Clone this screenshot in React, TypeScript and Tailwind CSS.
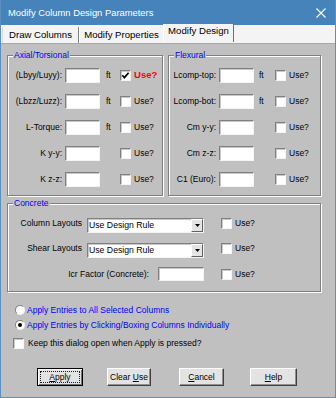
import React from "react";

const sunken =
  "bg-white border border-t-[#808080] border-l-[#808080] border-b-[#f4f4f4] border-r-[#f4f4f4] shadow-[inset_1px_1px_0_#c8c8c8]";

function Box({ className }: { className: string }) {
  return <div className={`${sunken} ${className}`} />;
}

function Check({ checked }: { checked?: boolean }) {
  return (
    <div className={`w-[11px] h-[11px] shrink-0 flex items-center justify-center ${sunken}`}>
      {checked && (
        <svg width="9" height="9" viewBox="0 0 9 9">
          <path d="M1.3 4.3 L3.4 6.6 L7.6 1.8" stroke="#000" strokeWidth="1.7" fill="none" />
        </svg>
      )}
    </div>
  );
}

function Radio({ checked }: { checked?: boolean }) {
  return (
    <div className="w-[10px] h-[10px] shrink-0 rounded-full bg-white border border-t-[#808080] border-l-[#808080] border-b-[#f0f0f0] border-r-[#f0f0f0] flex items-center justify-center">
      {checked && <div className="w-[4px] h-[4px] rounded-full bg-black" />}
    </div>
  );
}

function Group({
  label,
  className,
  children,
}: {
  label: string;
  className: string;
  children: React.ReactNode;
}) {
  return (
    <div
      className={`relative border border-[#808080] shadow-[inset_1px_1px_0_#ffffff,1px_1px_0_#ffffff] ${className}`}
    >
      <div className="absolute -top-[7px] left-[5px] h-[12px] leading-[12px] px-[1px] bg-[#c0c0c0] text-[#0000ff]">
        {label}
      </div>
      {children}
    </div>
  );
}

function ARow({ label, ft, red }: { label: string; ft?: boolean; red?: boolean }) {
  return (
    <div className="flex items-center h-[26px]">
      <div className="w-[54px] text-right whitespace-nowrap">{label}</div>
      <Box className="ml-[3px] w-[35px] h-[15px] shrink-0" />
      <div className="w-[20px] pl-[6px]">{ft ? "ft" : ""}</div>
      <Check checked={red} />
      <span className={`ml-[3px] ${red ? "text-[#ff0000] font-bold text-[9.6px]" : ""}`}>Use?</span>
    </div>
  );
}

function FRow({ label, ft }: { label: string; ft?: boolean }) {
  return (
    <div className="flex items-center h-[26px]">
      <div className="w-[47px] text-right whitespace-nowrap">{label}</div>
      <Box className="ml-[3px] w-[35px] h-[15px] shrink-0" />
      <div className="w-[21px] pl-[5px]">{ft ? "ft" : ""}</div>
      <Check />
      <span className="ml-[3px]">Use?</span>
    </div>
  );
}

function Select() {
  return (
    <div className={`mt-[4px] w-[117px] h-[15px] shrink-0 flex items-center ${sunken}`}>
      <span className="flex-1 pl-[1px] text-[8.7px] whitespace-nowrap">Use Design Rule</span>
      <div className="w-[12px] h-[13px] bg-[#e4e4e4] border border-t-white border-l-white border-b-[#606060] border-r-[#606060] flex items-center justify-center">
        <svg width="5" height="3" viewBox="0 0 5 3">
          <path d="M0 0 H5 L2.5 3 Z" fill="#000" />
        </svg>
      </div>
    </div>
  );
}

function Btn({
  children,
  className,
  def,
}: {
  children: React.ReactNode;
  className: string;
  def?: boolean;
}) {
  return (
    <div
      className={`relative h-[18px] shrink-0 flex items-center justify-center bg-[#e3e3e3] ${
        def
          ? "border border-black shadow-[inset_1px_1px_0_#ffffff,inset_-1px_-1px_0_#707070]"
          : "border border-t-white border-l-white border-b-[#404040] border-r-[#404040] shadow-[inset_-1px_-1px_0_#909090]"
      } ${className}`}
    >
      {def && <div className="absolute inset-[2px] border border-dotted border-[#202020]" />}
      <span className="relative">{children}</span>
    </div>
  );
}

export default function App() {
  return (
    <div className="w-[336px] h-[398px] flex flex-col border-x border-b border-[#5a8fc0] font-['Liberation_Sans',Arial,sans-serif] text-[8.5px] leading-none text-black bg-[#c0c0c0] overflow-hidden">
      {/* Title bar */}
      <div className="h-[25px] shrink-0 bg-[#4683ba] flex items-center -mx-[1px] pl-[8px] pr-[8px]">
        <span className="text-white text-[9.4px] flex-1 whitespace-nowrap">Modify Column Design Parameters</span>
        <svg width="10" height="10" viewBox="0 0 10 10" className="mr-[2px]">
          <path d="M0.5 0.5 L9.5 9.5 M9.5 0.5 L0.5 9.5" stroke="#ffffff" strokeWidth="1.1" />
        </svg>
      </div>

      {/* Tabs */}
      <div className="h-[19px] shrink-0 bg-[#f4f4f4] flex items-end pl-[1px] border-b border-[#a8a8a8] text-[9.6px]">
        <div className="h-[16px] w-[77px] flex items-center justify-center border-l border-l-[#d8d8d8] border-r border-r-[#808080] whitespace-nowrap">
          Draw Columns
        </div>
        <div className="h-[16px] w-[84px] flex items-center justify-center border-l border-l-white whitespace-nowrap">
          Modify Properties
        </div>
        <div className="h-[18px] w-[71px] mb-[1px] flex items-start pt-[2px] justify-center bg-[#f4f4f4] border-l border-l-white border-r border-r-[#707070] whitespace-nowrap">
          Modify Design
        </div>
      </div>

      {/* Body */}
      <div className="flex-1 flex flex-col pl-[6px] pt-[11px]">
        <div className="flex">
          <Group label="Axial/Torsional" className="w-[156px] h-[141px] pt-[6px]">
            <ARow label="(Lbyy/Luyy):" ft red />
            <ARow label="(Lbzz/Luzz):" ft />
            <ARow label="L-Torque:" ft />
            <ARow label="K y-y:" />
            <ARow label="K z-z:" />
          </Group>
          <Group label="Flexural" className="ml-[5px] w-[153px] h-[141px] pt-[6px]">
            <FRow label="Lcomp-top:" ft />
            <FRow label="Lcomp-bot:" ft />
            <FRow label="Cm y-y:" />
            <FRow label="Cm z-z:" />
            <FRow label="C1 (Euro):" />
          </Group>
        </div>

        <Group label="Concrete" className="mt-[7px] w-[314px] h-[89px] pt-[6px]">
          <div className="flex items-center h-[26px]">
            <div className="w-[74px] text-right whitespace-nowrap">Column Layouts</div>
            <div className="ml-[5px] flex">
              <Select />
            </div>
            <div className="ml-[17px] flex items-center">
              <Check />
              <span className="ml-[3px]">Use?</span>
            </div>
          </div>
          <div className="flex items-center h-[25px]">
            <div className="w-[74px] text-right whitespace-nowrap">Shear Layouts</div>
            <div className="ml-[5px] flex">
              <Select />
            </div>
            <div className="ml-[17px] flex items-center">
              <Check />
              <span className="ml-[3px]">Use?</span>
            </div>
          </div>
          <div className="flex items-center h-[26px]">
            <div className="w-[141px] text-right whitespace-nowrap">Icr Factor (Concrete):</div>
            <Box className="ml-[9px] w-[46px] h-[14px] shrink-0" />
            <div className="ml-[17px] flex items-center">
              <Check />
              <span className="ml-[3px]">Use?</span>
            </div>
          </div>
        </Group>

        <div className="mt-[13px] pl-[6px] flex flex-col">
          <div className="flex items-center h-[10px] ml-[2px]">
            <Radio />
            <span className="ml-[2px] text-[#0000ff] whitespace-nowrap">Apply Entries to All Selected Columns</span>
          </div>
          <div className="flex items-center h-[10px] ml-[2px] mt-[5px]">
            <Radio checked />
            <span className="ml-[2px] text-[#0000ff] whitespace-nowrap">
              Apply Entries by Clicking/Boxing Columns Individually
            </span>
          </div>
          <div className="flex items-center h-[11px] mt-[8px]">
            <Check />
            <span className="ml-[4px] whitespace-nowrap">Keep this dialog open when Apply is pressed?</span>
          </div>
        </div>

        <div className="mt-[19px] flex">
          <Btn def className="ml-[30px] w-[46px]">
            <span className="underline">A</span>pply
          </Btn>
          <Btn className="ml-[24px] w-[44px]">
            Clear <span className="underline">U</span>se
          </Btn>
          <Btn className="ml-[28px] w-[45px]">
            <span className="underline">C</span>ancel
          </Btn>
          <Btn className="ml-[26px] w-[47px]">
            <span className="underline">H</span>elp
          </Btn>
        </div>
      </div>
    </div>
  );
}
